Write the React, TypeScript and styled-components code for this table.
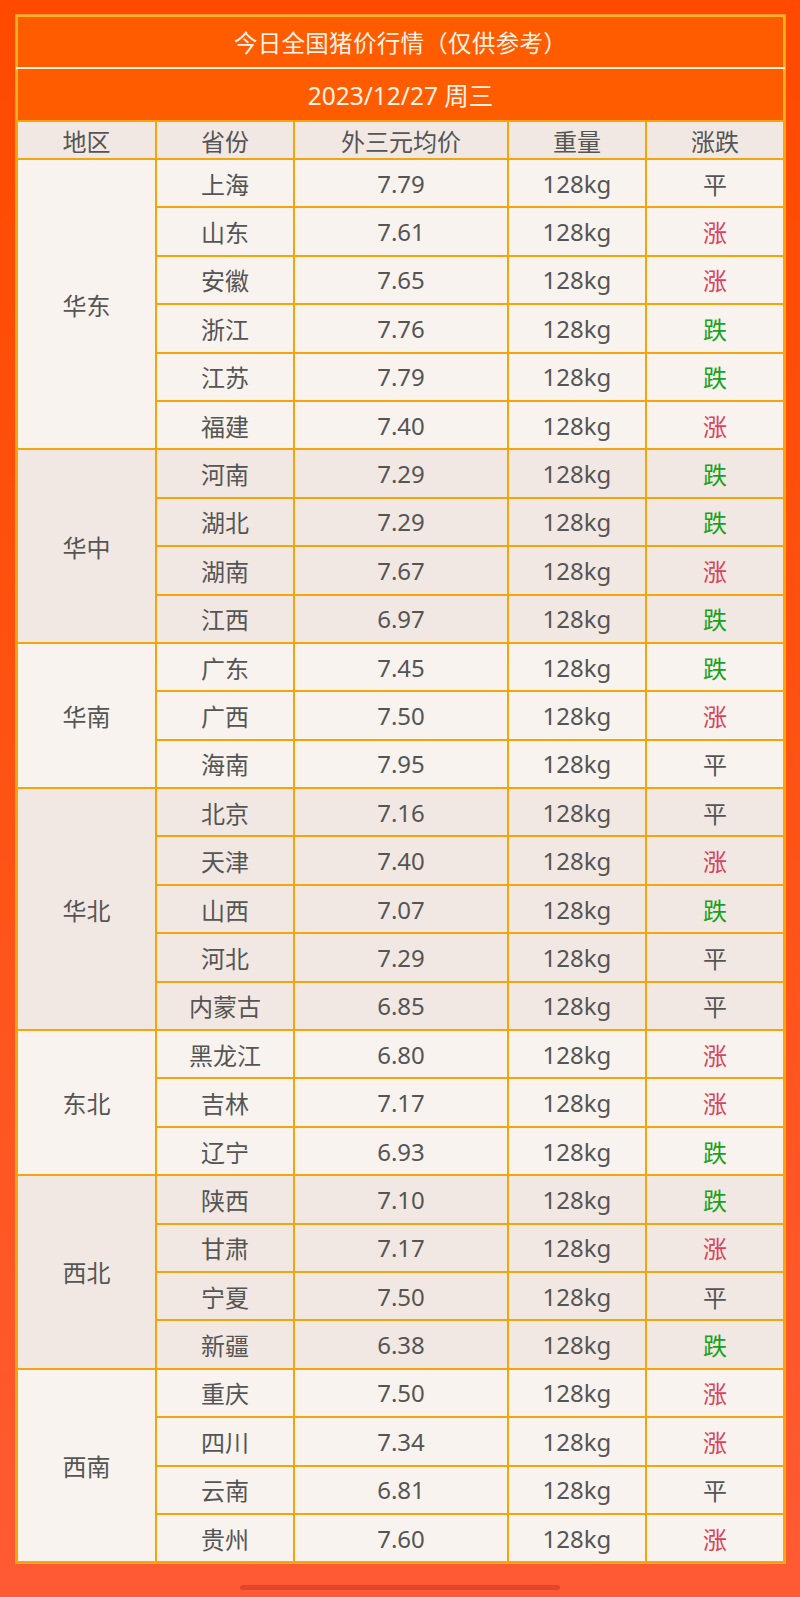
import styled, { createGlobalStyle } from 'styled-components';

type Trend = '平' | '涨' | '跌';

interface Row {
  province: string;
  price: string;
  trend: Trend;
}

interface Group {
  region: string;
  rows: Row[];
}

const groups: Group[] = [
  {
    region: '华东',
    rows: [
      { province: '上海', price: '7.79', trend: '平' },
      { province: '山东', price: '7.61', trend: '涨' },
      { province: '安徽', price: '7.65', trend: '涨' },
      { province: '浙江', price: '7.76', trend: '跌' },
      { province: '江苏', price: '7.79', trend: '跌' },
      { province: '福建', price: '7.40', trend: '涨' }
    ]
  },
  {
    region: '华中',
    rows: [
      { province: '河南', price: '7.29', trend: '跌' },
      { province: '湖北', price: '7.29', trend: '跌' },
      { province: '湖南', price: '7.67', trend: '涨' },
      { province: '江西', price: '6.97', trend: '跌' }
    ]
  },
  {
    region: '华南',
    rows: [
      { province: '广东', price: '7.45', trend: '跌' },
      { province: '广西', price: '7.50', trend: '涨' },
      { province: '海南', price: '7.95', trend: '平' }
    ]
  },
  {
    region: '华北',
    rows: [
      { province: '北京', price: '7.16', trend: '平' },
      { province: '天津', price: '7.40', trend: '涨' },
      { province: '山西', price: '7.07', trend: '跌' },
      { province: '河北', price: '7.29', trend: '平' },
      { province: '内蒙古', price: '6.85', trend: '平' }
    ]
  },
  {
    region: '东北',
    rows: [
      { province: '黑龙江', price: '6.80', trend: '涨' },
      { province: '吉林', price: '7.17', trend: '涨' },
      { province: '辽宁', price: '6.93', trend: '跌' }
    ]
  },
  {
    region: '西北',
    rows: [
      { province: '陕西', price: '7.10', trend: '跌' },
      { province: '甘肃', price: '7.17', trend: '涨' },
      { province: '宁夏', price: '7.50', trend: '平' },
      { province: '新疆', price: '6.38', trend: '跌' }
    ]
  },
  {
    region: '西南',
    rows: [
      { province: '重庆', price: '7.50', trend: '涨' },
      { province: '四川', price: '7.34', trend: '涨' },
      { province: '云南', price: '6.81', trend: '平' },
      { province: '贵州', price: '7.60', trend: '涨' }
    ]
  }
];

const trendColors: Record<Trend, string> = {
  平: '#555555',
  涨: '#d8435a',
  跌: '#17a318'
};

const App = () => {
  return (
    <>
      <GlobalStyle />
      <Page>
        <PriceTable>
          <colgroup>
            <col style={{ width: 139 }} />
            <col style={{ width: 138 }} />
            <col style={{ width: 214 }} />
            <col style={{ width: 138 }} />
            <col style={{ width: 138 }} />
          </colgroup>
          <thead>
            <tr>
              <TitleCell colSpan={5}>今日全国猪价行情（仅供参考）</TitleCell>
            </tr>
            <tr>
              <DateCell colSpan={5}>2023/12/27 周三</DateCell>
            </tr>
            <tr>
              <HeadCell>地区</HeadCell>
              <HeadCell>省份</HeadCell>
              <HeadCell>外三元均价</HeadCell>
              <HeadCell>重量</HeadCell>
              <HeadCell>涨跌</HeadCell>
            </tr>
          </thead>
          <tbody>
            {groups.map((group, gi) =>
              group.rows.map((row, ri) => (
                <tr key={row.province}>
                  {ri === 0 && (
                    <Cell $shade={gi % 2 === 1} rowSpan={group.rows.length}>
                      {group.region}
                    </Cell>
                  )}
                  <Cell $shade={gi % 2 === 1}>{row.province}</Cell>
                  <Cell $shade={gi % 2 === 1}>{row.price}</Cell>
                  <Cell $shade={gi % 2 === 1}>128kg</Cell>
                  <Cell $shade={gi % 2 === 1} $color={trendColors[row.trend]}>
                    {row.trend}
                  </Cell>
                </tr>
              ))
            )}
          </tbody>
        </PriceTable>
        <HomeBar />
      </Page>
    </>
  );
};

export default App;

const GlobalStyle = createGlobalStyle`
  html, body {
    margin: 0;
    padding: 0;
  }

  body {
    background: linear-gradient(180deg, #ff4a00 0%, #ff5214 50%, #ff5a34 100%);
    font-family: "Noto Sans", "Noto Sans CJK SC", sans-serif;
  }
`;

const Page = styled.div`
  width: 800px;
  height: 1597px;
  box-sizing: border-box;
  padding: 15px 17px 0 16px;
  display: flex;
  flex-direction: column;
  align-items: flex-start;
`;

const PriceTable = styled.table`
  width: 767px;
  table-layout: fixed;
  border-collapse: collapse;
  border: 2px solid #ffb21a;
  box-shadow: 0 0 0 1px rgba(255, 200, 80, 0.6);
`;

const TitleCell = styled.th`
  height: 50px;
  padding: 0;
  background: #ff5c00;
  color: #fff3e6;
  font-size: 23.5px;
  font-weight: 400;
  letter-spacing: 0.3px;
  text-align: center;
  border-bottom: 2px solid #fff1d9;
`;

const DateCell = styled.th`
  height: 51px;
  padding: 0;
  background: #ff5c00;
  color: #fff3e6;
  font-size: 24.5px;
  font-weight: 400;
  text-align: center;
`;

const HeadCell = styled.th`
  height: 36px;
  padding: 0;
  background: #f2e8e3;
  color: #555555;
  font-size: 24px;
  font-weight: 400;
  text-align: center;
  border: 2px solid #f4a50c;
`;

const Cell = styled.td<{ $shade?: boolean; $color?: string }>`
  height: 46.4px;
  padding: 0;
  background: ${({ $shade }) => ($shade ? '#f2e8e3' : '#f8f3ef')};
  color: ${({ $color }) => $color || '#555555'};
  font-size: 24px;
  text-align: center;
  border: 2px solid #f4a50c;
`;

const HomeBar = styled.div`
  align-self: center;
  width: 320px;
  height: 5px;
  margin-top: 22px;
  border-radius: 3px;
  background: #e2462a;
`;
